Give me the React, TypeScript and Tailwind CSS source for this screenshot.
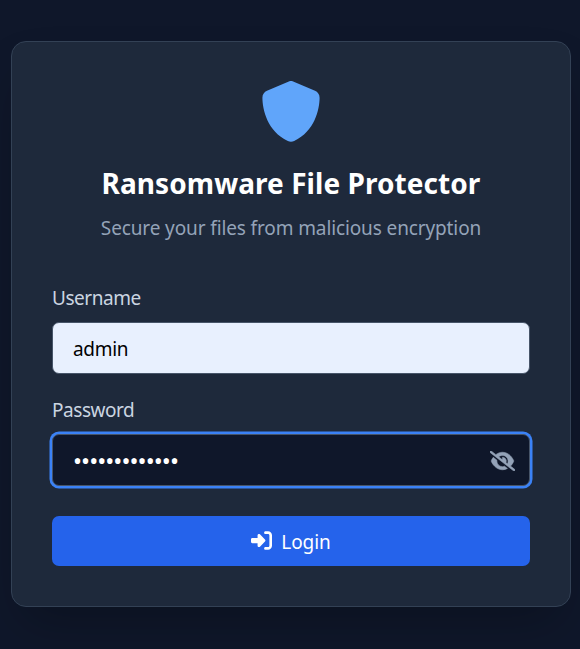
import React from "react";
import { FaShield, FaEyeSlash, FaRightToBracket } from "react-icons/fa6";

export default function App() {
  return (
    <main className="h-[649px] w-[580px] overflow-hidden bg-[#0f172a] pl-[11px] pt-[41px] font-['Noto_Sans',sans-serif] text-[19px]">
      <section className="flex h-[566px] w-[560px] flex-col rounded-[15px] border border-[#334155] bg-[#1e293b] px-[40px] pt-[39px] shadow-2xl">
        <header className="flex flex-col items-center">
          <FaShield className="h-[61px] w-[62px] text-[#60a5fa]" />
          <h1 className="mt-[21px] h-[40px] whitespace-nowrap text-[28px] font-bold leading-[40px] tracking-[0.06px] text-white">Ransomware File Protector</h1>
          <p className="mt-[11px] h-[28px] whitespace-nowrap leading-[28px] tracking-[-0.12px] text-[#94a3b8]">Secure your files from malicious encryption</p>
        </header>
        <form className="mt-[42px]" onSubmit={(e) => e.preventDefault()}>
          <label className="block h-[28px] leading-[28px] tracking-[-0.45px] text-[#cbd5e1]">Username</label>
          <div className="mt-[10px] flex h-[52px] w-[478px] items-center rounded-[7px] border border-[#475569] bg-[#e8f0fe] px-[20px] pt-[2px] tracking-[-0.3px] text-black">admin</div>
          <label className="mt-[22px] block h-[28px] leading-[28px] tracking-[-0.45px] text-[#cbd5e1]">Password</label>
          <div className="mt-[10px] flex h-[52px] w-[478px] items-center justify-between rounded-[7px] border border-[#475569] bg-[#0f172a] pl-[20px] pr-[14px] text-white ring-[2.5px] ring-[#3b82f6]">
            <span className="pt-[2px] text-[24px] leading-[28px] tracking-[-0.95px]">•••••••••••••</span>
            <FaEyeSlash strokeWidth={14} className="mt-px h-[20px] w-[25px] text-[#94a3b8]" />
          </div>
          <button className="mt-[30px] flex h-[50px] w-[478px] items-center justify-center gap-[9px] rounded-[7px] bg-[#2563eb] text-white">
            <FaRightToBracket className="mb-px h-[21px] w-[21px]" />
            <span className="pt-[2px] tracking-[-0.1px]">Login</span>
          </button>
        </form>
      </section>
    </main>
  );
}
